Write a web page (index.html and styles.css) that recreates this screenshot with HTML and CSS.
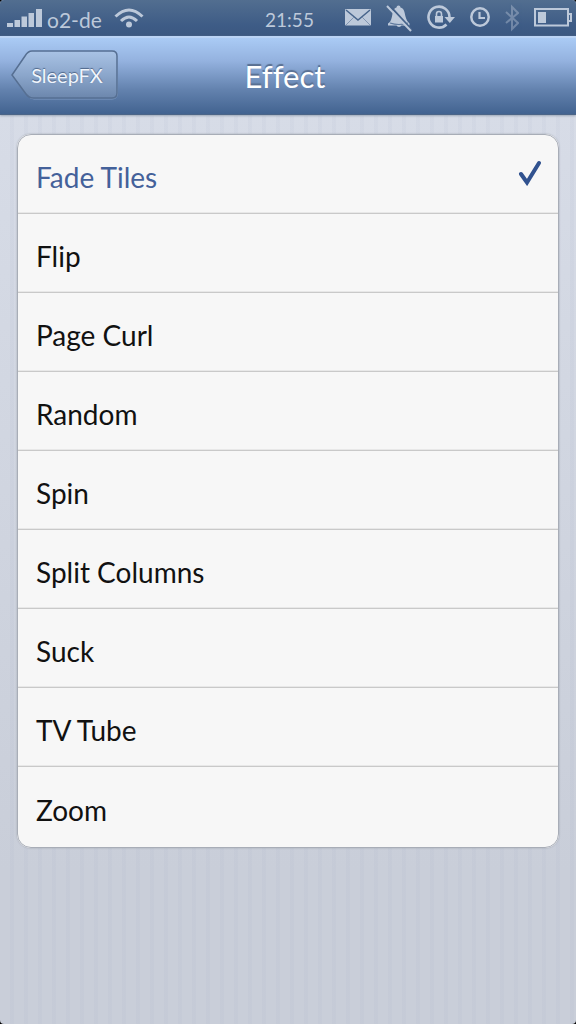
FILE: index.html
```html
<!DOCTYPE html>
<html lang="en">
<head>
<meta charset="utf-8">
<meta name="viewport" content="width=device-width, initial-scale=1">
<title>Effect</title>
<link rel="stylesheet" href="styles.css">
</head>
<body>
<div class="screen">
  <div class="status">
    <div class="status-left">
      <svg class="signal" width="36" height="20" viewBox="0 0 36 20" aria-hidden="true"><path fill="currentColor" d="M0 15h6v4H0zM7.500 12h5.500v7H7.500zM14.500 8.500H20V19h-5.500zM21.500 5H27v14h-5.500zM29 1h6v18h-6z"/></svg>
      <span class="carrier">o2-de</span>
      <svg width="30" height="20" viewBox="0 0 30 20" aria-hidden="true"><g fill="none" stroke="currentColor" stroke-width="3"><path d="M1.500 8.500Q15-4.500 28.500 8.500M7 13Q15 5 23 13"/></g><circle cx="15" cy="16.500" r="3" fill="currentColor"/></svg>
    </div>
    <span class="clock">21:55</span>
    <div class="status-right">
      <svg width="26" height="28" viewBox="0 0 26 28" aria-hidden="true"><rect y="5" width="26" height="16.500" rx="1" fill="currentColor"/><path d="M1 6l12 10L25 6" fill="none" stroke="#48658c" stroke-width="1.500"/><path d="M1 21l8-8M25 21l-8-8" fill="none" stroke="#8296b2" stroke-width="1"/></svg>
      <svg width="26" height="28" viewBox="0 0 26 28" aria-hidden="true"><path fill="currentColor" d="M10.500 3.500a2 2 0 0 1 4 0c4 1 4 5 5 9 .7 3 2 5 4 7v2H2v-2c2-1 3-3 4-7 1-5 1-8 4.500-9zM10 21h6q-3 4-6 0z"/><path d="M4 19q9 3 18 0" fill="none" stroke="#5c779b" stroke-width="1.200"/><path d="M3.500 1.500l23 25" stroke="#45628a" stroke-width="2"/><path d="M1 2l24 25" stroke="currentColor" stroke-width="2"/></svg>
      <svg width="28" height="28" viewBox="0 0 28 28" aria-hidden="true"><path d="M19.500 20.500A10.500 10.500 0 1 1 22.500 13" fill="none" stroke="currentColor" stroke-width="2.600"/><path d="M17.500 13H28l-5.200 6z" fill="currentColor"/><path d="M8 12h8v6.500H8z" fill="currentColor"/><path d="M9.500 12v-2a2.500 2.500 0 0 1 5 0v2" fill="none" stroke="currentColor" stroke-width="1.600"/></svg>
      <svg width="20" height="28" viewBox="0 0 20 28" aria-hidden="true"><circle cx="10" cy="13" r="8.700" fill="none" stroke="currentColor" stroke-width="2.500"/><path d="M9.500 8v6H15" fill="none" stroke="currentColor" stroke-width="2.200"/></svg>
      <svg class="dim" width="14" height="28" viewBox="0 0 14 28" aria-hidden="true"><path d="M1 8l12 11-6 6V3l6 6L1 19" fill="none" stroke="currentColor" stroke-width="2"/></svg>
      <svg width="38" height="28" viewBox="0 0 38 28" aria-hidden="true"><rect x="1" y="5" width="33" height="16.500" fill="none" stroke="currentColor" stroke-width="2"/><path d="M4 8h8v11H4z" fill="currentColor"/><path d="M35 10h2v7h-2" fill="none" stroke="currentColor" stroke-width="2"/></svg>
    </div>
  </div>
  <header class="navbar">
    <button class="back" type="button">
      <svg class="back-shape" viewBox="0 0 108 50" aria-hidden="true">
        <defs><linearGradient id="back-fill" x1="0" y1="0" x2="0" y2="1"><stop offset="0" stop-color="#a9c3e5"/><stop offset=".5" stop-color="#8ca7cc"/><stop offset="1" stop-color="#6c87ad"/></linearGradient></defs>
        <path d="M21 2.500H101Q106.500 2.500 106.500 8V43Q106.500 49 101 49H23Q19 49 16 45L1.500 26 15 7Q18 2.500 21 2.500Z" fill="none" stroke="#a8c2e5" stroke-opacity=".5"/>
        <path d="M21 1H101Q106 1 106 6V43Q106 48 101 48H22Q18 48 15 44L1 25 14 6Q17 1 21 1Z" fill="url(#back-fill)" stroke="#566f92" stroke-width="1.500"/>
      </svg>
      <span class="back-label">SleepFX</span>
    </button>
    <h1 class="title">Effect</h1>
  </header>
  <main class="content">
    <fieldset class="list" aria-label="Effect">
      <label class="row"><input class="choice" type="radio" name="effect" checked><span class="name">Fade Tiles</span><svg class="check" width="24" height="26" viewBox="0 0 24 26" aria-hidden="true"><path d="M3 14l6 8.500L21 3" fill="none" stroke="currentColor" stroke-width="4" stroke-linecap="round"/></svg></label>
      <label class="row"><input class="choice" type="radio" name="effect"><span class="name">Flip</span></label>
      <label class="row"><input class="choice" type="radio" name="effect"><span class="name">Page Curl</span></label>
      <label class="row"><input class="choice" type="radio" name="effect"><span class="name">Random</span></label>
      <label class="row"><input class="choice" type="radio" name="effect"><span class="name">Spin</span></label>
      <label class="row"><input class="choice" type="radio" name="effect"><span class="name">Split Columns</span></label>
      <label class="row"><input class="choice" type="radio" name="effect"><span class="name">Suck</span></label>
      <label class="row"><input class="choice" type="radio" name="effect"><span class="name">TV Tube</span></label>
      <label class="row"><input class="choice" type="radio" name="effect"><span class="name">Zoom</span></label>
    </fieldset>
  </main>
</div>
</body>
</html>
```
FILE: styles.css
```css
* {
  box-sizing: border-box;
}

body {
  margin: 0;
  background: #000;
  font-family: Lato, "Open Sans", sans-serif;
  font-variant-ligatures: none;
}

.screen {
  display: flex;
  flex-direction: column;
  min-height: 100vh;
  border-radius: 4px;
  overflow: hidden;
  background:
    repeating-linear-gradient(90deg, transparent 0 10px, rgba(150, 160, 190, 0.07) 10px 14px),
    linear-gradient(#d9dee9, #c9ced9 85%);
}

.status {
  display: grid;
  grid-template-columns: 1fr auto 1fr;
  align-items: center;
  height: 36px;
  padding: 0 4px 0 7px;
  background: linear-gradient(#526e90, #3e5c86 70%, #3b5881);
  color: #bdc9da;
}

.status svg {
  display: block;
}

.status-left {
  display: flex;
  align-items: center;
  gap: 4px;
}

.carrier {
  padding: 4px 8px 0 0;
  font-size: 21px;
  line-height: 24px;
}

.clock {
  padding-top: 4px;
  font-size: 19px;
  line-height: 24px;
}

.status-right {
  display: flex;
  align-items: center;
  justify-content: flex-end;
  gap: 15px;
}

.dim {
  opacity: 0.4;
}

.navbar {
  display: grid;
  grid-template-columns: 1fr auto 1fr;
  align-items: center;
  height: 79px;
  padding: 0 11px;
  border-top: 2px solid #bbd4f5;
  border-bottom: 1px solid #4c6587;
  background: linear-gradient(#aacbf5, #94b2df 30%, #6382ae 68%, #426390);
  box-shadow: 0 1px 2px #9ca7b8;
}

.back {
  display: grid;
  justify-self: start;
  width: 108px;
  margin-bottom: 2px;
  padding: 0;
  border: 0;
  background: none;
  color: #f0f5fc;
  font-family: inherit;
  font-size: 20px;
  line-height: 24px;
  text-shadow: 0 -1px 1px #4d6487;
}

.back-shape,
.back-label {
  grid-area: 1 / 1;
  align-self: center;
}

.back-shape {
  width: 100%;
}

.back-label {
  padding-left: 4px;
}

.title {
  margin: 0;
  padding-right: 6px;
  color: #fff;
  font-size: 31px;
  font-weight: 400;
  line-height: 40px;
  text-shadow: 0 -2px 1px #586e90;
}

.content {
  padding: 19px 17px;
}

.list {
  min-width: 0;
  margin: 0;
  padding: 0;
  border: 1px solid #a8adb7;
  border-radius: 14px;
  overflow: hidden;
  background: #f7f7f7;
  box-shadow: 0 0 2px #9ca2ad;
}

.row {
  display: flex;
  align-items: center;
  justify-content: space-between;
  height: 79px;
  padding: 5px 16px 0 18px;
  border-bottom: 1px solid #c9c9c9;
  box-shadow: inset 0 -1px #e8e8e8;
  color: #111;
  font-size: 28px;
  line-height: 32px;
}

.row:last-child {
  height: 80px;
  border-bottom: 0;
  box-shadow: none;
}

.choice {
  position: absolute;
  margin: 0;
  appearance: none;
}

.choice:checked ~ .name {
  color: #44619a;
}

.check {
  margin-bottom: 8px;
  color: #31528f;
}
```
